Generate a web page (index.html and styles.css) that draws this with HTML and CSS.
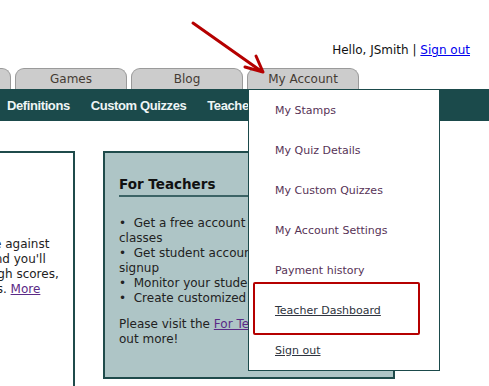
FILE: index.html
```html
<!DOCTYPE html>
<html lang="en">

<head>
  <meta charset="UTF-8">
  <title>My Account</title>
  <link rel="stylesheet" href="styles.css">
</head>

<body>
  <svg class="arrow" width="489" height="100" viewBox="0 0 489 100">
    <line x1="193" y1="23" x2="261" y2="71" />
    <polyline points="245,67 263,72 256,56" />
  </svg>

  <header class="top">
    <p class="hello">Hello, JSmith | <a href="#">Sign out</a></p>
  </header>

  <nav class="tabs">
    <a class="tab" href="#">Home</a>
    <a class="tab" href="#">Games</a>
    <a class="tab" href="#">Blog</a>
    <a class="tab" href="#">My Account</a>
  </nav>

  <div class="menu-bar">
    <ul class="menu">
      <li>Definitions</li>
      <li>Custom Quizzes</li>
      <li>Teachers</li>
      <li>Help</li>
    </ul>

    <ul class="dropdown">
      <li><a href="#">My Stamps</a></li>
      <li><a href="#">My Quiz Details</a></li>
      <li><a href="#">My Custom Quizzes</a></li>
      <li><a href="#">My Account Settings</a></li>
      <li><a href="#">Payment history</a></li>
      <li class="marked"><a class="link" href="#">Teacher Dashboard</a></li>
      <li><a class="link" href="#">Sign out</a></li>
    </ul>
  </div>

  <main class="content">
    <section class="panel students">
      <p>
        Play the games, and compete against<br>
        all the other players online and you'll<br>
        win stamps and get on the high scores,<br>
        or just test out your own skills. <a href="#">More</a>
      </p>
    </section>

    <section class="panel teachers">
      <h2>For Teachers</h2>
      <ul class="perks">
        <li>•&nbsp; Get a free account and manage your classes</li>
        <li>•&nbsp; Get student accounts without email signup</li>
        <li>•&nbsp; Monitor your students' progress</li>
        <li>•&nbsp; Create customized quizzes</li>
      </ul>
      <p>Please visit the <a href="#">For Teachers</a> page to find<br>out more!</p>
    </section>
  </main>
</body>

</html>
```

FILE: styles.css
```css
/* ---- General ---- */

:root {
  --teal: #1b4a4b;
  --red: #b50000;
}

body {
  margin: 0;
  height: 386px;
  overflow: hidden;
  position: relative;
  font-family: "DejaVu Sans", Verdana, sans-serif;
  font-size: 12px;
  color: #222;
  background: #fff;
}

a {
  color: #5b2a86;
}

ul {
  margin: 0;
  padding: 0;
  list-style: none;
}

/* ---- Header ---- */

.arrow {
  position: absolute;
  top: 0;
  left: 0;
  z-index: 5;
  pointer-events: none;
}

.arrow line,
.arrow polyline {
  fill: none;
  stroke: var(--red);
  stroke-width: 3;
  stroke-linecap: round;
  stroke-linejoin: round;
}

.top {
  height: 68px;
  display: flex;
  justify-content: flex-end;
  align-items: flex-start;
}

.hello {
  margin: 42px 19px 0 0;
  line-height: 16px;
  color: #111;
}

.hello a {
  color: #0000ee;
}

/* ---- Tabs ---- */

.tabs {
  display: flex;
  gap: 4px;
  margin-left: -101px;
}

.tab {
  width: 110px;
  height: 20px;
  line-height: 21px;
  text-align: center;
  background: #cccccc;
  border: 1px solid #9a9a9a;
  border-bottom: none;
  border-radius: 9px 9px 0 0;
  color: #453b33;
  text-decoration: none;
}

/* ---- Menu bar ---- */

.menu-bar {
  position: relative;
  height: 32px;
  background: var(--teal);
}

.menu {
  display: flex;
  gap: 21px;
  padding-left: 7px;
  height: 32px;
  align-items: center;
  white-space: nowrap;
  font-family: "Liberation Sans", Arial, sans-serif;
  font-weight: bold;
  font-size: 13px;
  letter-spacing: -0.4px;
  color: #eef5f5;
}

.dropdown {
  position: absolute;
  top: 0;
  left: 248px;
  width: 190px;
  background: #fff;
  border: 1.5px solid var(--teal);
  z-index: 3;
}

.dropdown li {
  height: 40px;
  display: flex;
  align-items: center;
  padding-left: 26px;
}

.dropdown a {
  font-size: 11px;
  color: #573356;
  text-decoration: none;
}

.dropdown a.link {
  color: #2e3440;
  text-decoration: underline;
}

.dropdown .marked {
  position: relative;
}

.dropdown .marked::after {
  content: "";
  position: absolute;
  top: -8px;
  left: 4px;
  width: 163px;
  height: 49px;
  border: 2px solid var(--red);
  border-radius: 2px;
}

/* ---- Content ---- */

.content {
  display: flex;
  gap: 28px;
  margin-top: 30px;
  align-items: flex-start;
}

.panel {
  border: 2px solid #1f4b4b;
}

.students {
  flex: none;
  margin-left: -198px;
  width: 233px;
  height: 260px;
  padding: 84px 18px 0;
  overflow: hidden;
}

.students p {
  margin: 0;
  line-height: 15px;
  white-space: nowrap;
}

.teachers {
  flex: none;
  width: 258px;
  height: 224px;
  padding: 0 16px 0 14px;
  background: #aec5c6;
}

.teachers h2 {
  margin: 23px 0 0;
  padding-bottom: 3px;
  font-size: 13.5px;
  color: #111;
  border-bottom: 2px solid #3c6466;
}

.perks {
  margin-top: 19px;
  line-height: 15px;
}

.teachers p {
  margin: 11px 0 0;
  line-height: 15px;
}
```
